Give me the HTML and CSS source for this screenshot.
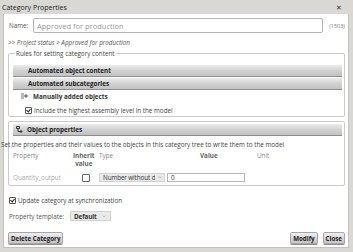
FILE: index.html
```html
<!DOCTYPE html>
<html lang="en">
<head>
    <meta charset="UTF-8">
    <title>Category Properties</title>
    <link rel="stylesheet" href="styles.css">
</head>
<body>

<div class="dialog">
    <div class="titlebar">
        <span class="title">Category Properties</span>
        <span class="close">✕</span>
    </div>

    <div class="content">
        <div class="name-row">
            <span class="label">Name:</span>
            <div class="field name-field">Approved for production</div>
            <span class="count">(1503)</span>
        </div>
        <div class="crumb">&gt;&gt; Project status &gt; Approved for production</div>

        <fieldset class="rules">
            <legend>Rules for setting category content</legend>
            <div class="bar">Automated object content</div>
            <div class="bar">Automated subcategories</div>
            <div class="manual">
                <svg class="icon" width="7" height="6" viewBox="0 0 7 6">
                    <path d="M0 1h3M0 3h3M0 5h3" stroke="#777" stroke-width="1"/>
                    <path d="M5 1v4M3 3h4" stroke="#555" stroke-width="1"/>
                </svg>
                Manually added objects
            </div>
            <div class="check include">
                <span class="box on"></span>
                Include the highest assembly level in the model
            </div>
        </fieldset>

        <!-- Proprietes des objets -->
        <div class="panel">
            <div class="bar">
                <svg class="icon" width="7" height="7" viewBox="0 0 7 7">
                    <path d="M0.5 0.5h3v2h-3z M2 2.5v3h4" fill="none" stroke="#333" stroke-width="1"/>
                    <path d="M4.5 4l1.5 1.5l-1.5 1.5" fill="none" stroke="#333" stroke-width="1"/>
                </svg>
                Object properties
            </div>
            <div class="hint">Set the properties and their values to the objects in this category tree to write them to the model</div>
            <div class="grid">
                <span class="head">Property</span>
                <span class="head strong">Inherit<br>value</span>
                <span class="head">Type</span>
                <span class="head strong value-head">Value</span>
                <span class="head">Unit</span>

                <span class="prop">Quantity_output</span>
                <span class="cell-box"><span class="box"></span></span>
                <div class="select type-select">
                    <span class="clip">Number without de</span>
                    <svg class="arrow" width="4" height="3" viewBox="0 0 4 3"><path d="M0.5 0.5l1.5 1.5l1.5-1.5" fill="none" stroke="#aaa" stroke-width="0.8"/></svg>
                </div>
                <div class="field value-field">0</div>
                <span></span>
            </div>
        </div>

        <div class="check update">
            <span class="box on"></span>
            Update category at synchronization
        </div>
        <div class="template-row">
            <span class="label">Property template:</span>
            <div class="select template-select">
                <span>Default</span>
                <svg class="arrow" width="4" height="3" viewBox="0 0 4 3"><path d="M0.5 0.5l1.5 1.5l1.5-1.5" fill="none" stroke="#aaa" stroke-width="0.8"/></svg>
            </div>
        </div>

        <div class="buttons">
            <button class="btn">Delete Category</button>
            <span class="spacer"></span>
            <button class="btn">Modify</button>
            <button class="btn">Close</button>
        </div>
    </div>
</div>

</body>
</html>
```

FILE: styles.css
```css
/* Fenetre */
body {
    margin: 0;
    font-family: "Open Sans", "Noto Sans", sans-serif;
    font-size: 6.3px;
    color: #333;
}

.dialog {
    width: 353px;
    height: 252px;
    background-color: #d9d8d5;
    box-sizing: border-box;
    padding: 0 4px 4px 3px;
    display: flex;
    flex-direction: column;
}

.titlebar {
    height: 14px;
    display: flex;
    align-items: center;
    justify-content: space-between;
    padding: 0 7px 0 0;
}

.title {
    font-size: 7px;
    color: #222;
    margin-left: -1px;
}

.close {
    font-size: 7px;
    color: #333;
}

.content {
    flex: 1;
    background-color: #fff;
    border: 1px solid #c2c2c2;
    border-top: none;
    padding: 0 3px 0 4px;
    display: flex;
    flex-direction: column;
}

/* Nom */
.name-row {
    display: flex;
    align-items: center;
    height: 15px;
    margin-top: 4px;
}

.name-row .label {
    width: 24px;
    padding-left: 1px;
    color: #555;
}

.field {
    border: 1px solid #b4b4b4;
    background-color: #fff;
    box-sizing: border-box;
    display: flex;
    align-items: center;
    padding-left: 3px;
}

.name-field {
    flex: 1;
    height: 15px;
    font-size: 7.5px;
    color: #999;
    border-radius: 2px;
}

.count {
    width: 22px;
    text-align: right;
    font-size: 5.5px;
    color: #777;
}

.crumb {
    font-style: italic;
    color: #555;
    height: 10px;
    line-height: 10px;
    margin-top: 5px;
}

/* Regles */
.rules {
    margin: 1px 0 0 0;
    padding: 7px 2px 1px 4px;
    border: 1px solid #cacaca;
    border-radius: 2px;
}

.rules legend {
    padding: 0 1px;
    margin-left: 2px;
    color: #444;
    line-height: 9px;
}

.bar {
    height: 12px;
    box-sizing: border-box;
    background: linear-gradient(#ececec, #d2d2d2 50%, #c2c2c2);
    border-bottom: 1px solid #8f8f8f;
    font-weight: bold;
    color: #222;
    display: flex;
    align-items: center;
    padding-left: 15px;
    margin-bottom: 1px;
}

.manual {
    display: flex;
    align-items: center;
    height: 10px;
    padding-left: 8px;
    font-weight: bold;
    color: #333;
}

.manual .icon {
    margin-right: 5px;
}

.check {
    display: flex;
    align-items: center;
    height: 10px;
    padding-left: 12px;
    color: #444;
}

.include {
    margin-top: 4px;
}

.box {
    width: 5px;
    height: 5px;
    border: 1px solid #555;
    border-radius: 1px;
    background-color: #fff;
    margin-right: 2px;
    position: relative;
}

.box.on::after {
    content: "";
    position: absolute;
    left: 1px;
    top: 0;
    width: 2px;
    height: 3px;
    border: solid #222;
    border-width: 0 1px 1px 0;
    transform: rotate(40deg);
}

/* Panneau des proprietes */
.panel {
    margin-top: 4px;
    border: 1px solid #cacaca;
    border-radius: 2px;
    padding: 2px 2px 3px 4px;
}

.panel .bar {
    padding-left: 3px;
}

.panel .bar .icon {
    margin-right: 4px;
}

.hint {
    margin: 4px 0 0 -12px;
    height: 9px;
    line-height: 9px;
    color: #444;
    white-space: nowrap;
}

.grid {
    display: grid;
    grid-template-columns: 60px 26px 68px 90px 1fr;
    align-items: center;
    row-gap: 5px;
    margin-top: 3px;
}

.head {
    color: #888;
    align-self: start;
    line-height: 8px;
}

.head.strong {
    font-weight: bold;
    color: #666;
    text-align: center;
}

.head.strong:nth-child(2) {
    justify-self: start;
}

.value-head {
    text-align: left !important;
    padding-left: 33px;
}

.prop {
    color: #aaa;
}

.cell-box {
    display: flex;
    justify-content: center;
}

.cell-box .box {
    width: 6px;
    height: 6px;
    border-color: #666;
    margin: 0;
}

.select {
    display: flex;
    align-items: center;
    height: 9px;
    box-sizing: border-box;
    background-color: #eaeaea;
    border: 1px solid #d2d2d2;
    padding: 0 2px 0 3px;
    color: #333;
    white-space: nowrap;
    letter-spacing: -0.1px;
}

.select .clip {
    overflow: hidden;
    flex: 1;
    min-width: 0;
}

.select .arrow {
    flex: none;
    margin-left: 3px;
}

.type-select {
    width: 66px;
}

.value-field {
    width: 78px;
    height: 9px;
    color: #333;
}

/* Bas de fenetre */
.update {
    padding-left: 1px;
    margin-top: 9px;
}

.template-row {
    display: flex;
    align-items: center;
    height: 10px;
    margin-top: 6px;
}

.template-row .label {
    width: 61px;
    padding-left: 1px;
    color: #555;
}

.template-select {
    height: 10px;
    font-weight: bold;
    padding: 0 4px 0 3px;
}

.template-select .arrow {
    margin-left: 5px;
}

.buttons {
    display: flex;
    margin-top: 11px;
    gap: 5px;
}

.spacer {
    flex: 1;
}

.btn {
    font-family: inherit;
    font-size: 6.2px;
    font-weight: bold;
    color: #222;
    height: 12px;
    padding: 0 2px;
    border: 1px solid #a5a5a5;
    border-radius: 2px;
    background: linear-gradient(#f0f0f0, #d4d4d4 55%, #c6c6c6);
    box-shadow: 0 1px 0 #8f8f8f;
}
```
